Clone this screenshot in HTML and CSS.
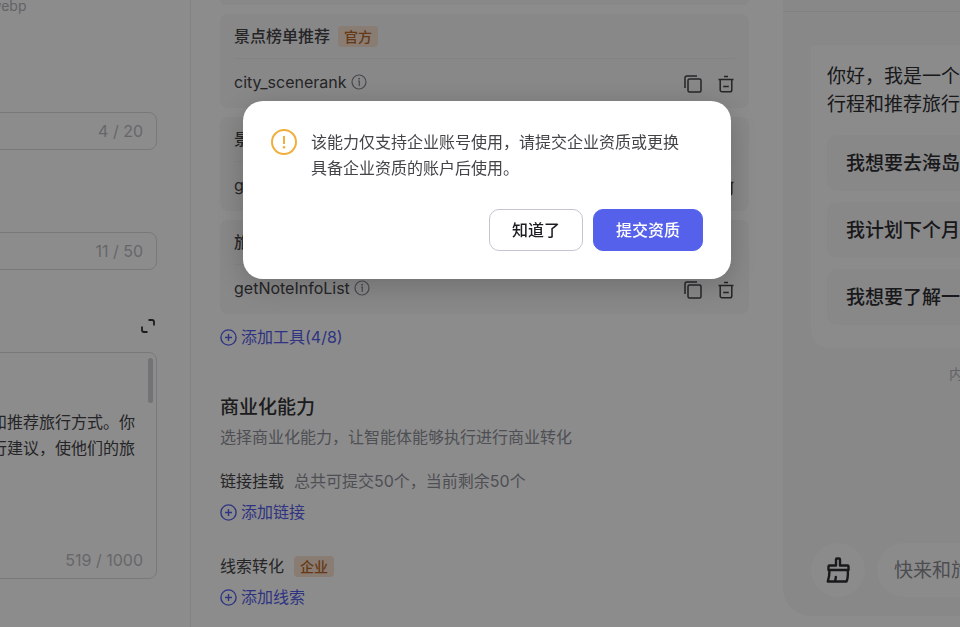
FILE: index.html
```html
<!DOCTYPE html>
<html lang="zh-CN">
    <head>
        <meta charset="utf-8">
        <title>智能体配置</title>
        <link rel="stylesheet" href="styles.css">
    </head>
    <body>
        <!-- shared icons -->
        <svg class="sprite" aria-hidden="true">
            <symbol id="info" viewBox="0 0 16 16">
                <circle cx="8" cy="8" r="7" fill="none" stroke="currentColor" stroke-width="1.2"/>
                <path d="M7 7H8.300V12" fill="none" stroke="currentColor" stroke-width="1.2"/>
                <circle cx="8.100" cy="4.700" r=".9" fill="currentColor"/>
            </symbol>
            <symbol id="copy" viewBox="0 0 18 18">
                <rect x="4" y="4" width="13" height="13" rx="1.5" fill="none" stroke="currentColor" stroke-width="1.5"/>
                <path d="M1 13V3a2 2 0 0 1 2-2h10" fill="none" stroke="currentColor" stroke-width="1.5"/>
            </symbol>
            <symbol id="trash" viewBox="0 0 18 18">
                <path d="M1.5 4.5h15M3.2 4.5V15a1.8 1.8 0 0 0 1.8 1.8h8a1.8 1.8 0 0 0 1.8-1.8V4.5M7 1.500h4M6.2 11.5h5.6" fill="none" stroke="currentColor" stroke-width="1.5"/>
            </symbol>
            <symbol id="plus" viewBox="0 0 17 17">
                <circle cx="8.5" cy="8.5" r="7.6" fill="none" stroke="currentColor" stroke-width="1.4"/>
                <path d="M8.5 5v7M5 8.5h7" fill="none" stroke="currentColor" stroke-width="1.4"/>
            </symbol>
        </svg>

        <main class="page">
            <section class="settings">
                <form class="form">
                    <p class="hint">webp</p>
                    <div class="field">
                        <input type="text" aria-label="名称">
                        <span class="count">4 / 20</span>
                    </div>
                    <div class="field second">
                        <input type="text" aria-label="简介">
                        <span class="count">11 / 50</span>
                    </div>
                    <button type="button" class="icon-btn expand" aria-label="展开">
                        <svg width="14" height="14" viewBox="0 0 14 14" fill="none" stroke="currentColor" stroke-width="1.8"><path d="M7.5 1H11a2 2 0 0 1 2 2v3.5M1 7.5V11a2 2 0 0 0 2 2h3.5"/></svg>
                    </button>
                    <div class="field">
                        <textarea aria-label="设定">


和推荐旅行方式。你
行建议，使他们的旅</textarea>
                        <span class="thumb"></span>
                        <span class="count bottom">519 / 1000</span>
                    </div>
                </form>
            </section>

            <section class="abilities">
                <div class="cards">
                    <div class="card tail"></div>
                    <div class="card">
                        <h3>景点榜单推荐 <span class="tag">官方</span></h3>
                        <div class="tool">
                            <span class="name">city_scenerank <svg class="info"><use href="#info"/></svg></span>
                            <button class="icon-btn" aria-label="复制"><svg width="18" height="18"><use href="#copy"/></svg></button>
                            <button class="icon-btn" aria-label="删除"><svg width="18" height="18"><use href="#trash"/></svg></button>
                        </div>
                    </div>
                    <div class="card">
                        <h3>景</h3>
                        <div class="tool">
                            <span class="name">g</span>
                            <button class="icon-btn" aria-label="复制"><svg width="18" height="18"><use href="#copy"/></svg></button>
                            <button class="icon-btn" aria-label="删除"><svg width="18" height="18"><use href="#trash"/></svg></button>
                        </div>
                    </div>
                    <div class="card">
                        <h3>旅</h3>
                        <div class="tool">
                            <span class="name">getNoteInfoList <svg class="info"><use href="#info"/></svg></span>
                            <button class="icon-btn" aria-label="复制"><svg width="18" height="18"><use href="#copy"/></svg></button>
                            <button class="icon-btn" aria-label="删除"><svg width="18" height="18"><use href="#trash"/></svg></button>
                        </div>
                    </div>
                </div>
                <a class="add" href="#"><svg width="17" height="17"><use href="#plus"/></svg>添加工具(4/8)</a>

                <h2>商业化能力</h2>
                <p class="desc">选择商业化能力，让智能体能够执行进行商业转化</p>

                <div class="row">链接挂载 <span class="muted">总共可提交50个，当前剩余50个</span></div>
                <a class="add" href="#"><svg width="17" height="17"><use href="#plus"/></svg>添加链接</a>

                <div class="row lead">线索转化 <span class="tag">企业</span></div>
                <a class="add" href="#"><svg width="17" height="17"><use href="#plus"/></svg>添加线索</a>
            </section>

            <section class="preview">
                <div class="preview-head"></div>
                <div class="chat">
                    <p>你好，我是一个<br>行程和推荐旅行</p>
                    <button class="suggest">我想要去海岛</button>
                    <button class="suggest">我计划下个月</button>
                    <button class="suggest">我想要了解一</button>
                </div>
                <p class="notice">内</p>
                <div class="bar">
                    <button class="clear" aria-label="清空">
                        <svg width="24" height="28" viewBox="0 0 24 28" fill="none" stroke="currentColor" stroke-width="2.4" stroke-linejoin="round" stroke-linecap="round"><path d="M2.500 14V10.500a1 1 0 0 1 1-1H10V3.500a1 1 0 0 1 1-1h2a1 1 0 0 1 1 1v6h7.500a1 1 0 0 1 1 1V14ZM3.500 14C3.500 19 3 22 1.800 25.500H20.500c1-2 1.600-6 1.300-11.500M9 25c.5-1.200.8-2.500.8-4"/></svg>
                    </button>
                    <input class="ask" type="text" placeholder="快来和旅行" aria-label="输入消息">
                </div>
            </section>
        </main>

        <div class="mask">
            <div class="modal" role="alertdialog" aria-modal="true" aria-describedby="message">
                <div class="message">
                    <svg width="26" height="26" viewBox="0 0 26 26"><circle cx="13" cy="13" r="12" fill="none" stroke="#f2ae3c" stroke-width="2"/><path d="M13 7v8" stroke="#f2ae3c" stroke-width="2"/><circle cx="13" cy="18.300" r="1.300" fill="#f2ae3c"/></svg>
                    <p id="message">该能力仅支持企业账号使用，请提交企业资质或更换<br>具备企业资质的账户后使用。</p>
                </div>
                <div class="actions">
                    <button class="btn">知道了</button>
                    <button class="btn primary">提交资质</button>
                </div>
            </div>
        </div>
    </body>
</html>
```

FILE: styles.css
```css
*{
    box-sizing: border-box;
}
body{
    margin: 0;
    height: 100vh;
    overflow: hidden;
    background-color: white;
    color: #444448;
    font-family: Inter, "Noto Sans CJK SC", sans-serif;
    font-size: 16px;
    line-height: 24px;
}
p, h2, h3{
    margin: 0;
}
button, input, textarea{
    font: inherit;
    color: inherit;
}
.sprite{
    display: none;
}
.page{
    display: flex;
    height: 100vh;
}
.icon-btn{
    display: flex;
    padding: 0;
    border: 0;
    background: none;
}

/* left column */
.settings{
    flex: 0 0 191px;
    display: flex;
    justify-content: flex-end;
    padding-right: 33px;
    border-right: 1px solid #eeeef1;
    overflow: hidden;
}
.form{
    flex: 0 0 178px;
}
.hint{
    padding-left: 11px;
    font-size: 14px;
    line-height: 12px;
    color: #b4b4ba;
    margin-bottom: 100px;
}
.field{
    position: relative;
}
.field input{
    display: block;
    width: 100%;
    height: 38px;
    border: 1px solid #dddde2;
    border-radius: 8px;
    background: none;
}
.second{
    margin-top: 82px;
}
.count{
    position: absolute;
    right: 14px;
    top: 7px;
    color: #bbbbc1;
}
.bottom{
    top: auto;
    bottom: 7px;
}
.expand{
    margin: 49px 2px 19px auto;
    color: #333336;
}
.field textarea{
    display: block;
    width: 100%;
    height: 227px;
    padding: 4px 20px 4px 11px;
    border: 1px solid #dddde2;
    border-radius: 8px;
    background: none;
    line-height: 26px;
    resize: none;
    overflow: hidden;
}
.thumb{
    position: absolute;
    right: 4px;
    top: 6px;
    width: 5px;
    height: 45px;
    border-radius: 3px;
    background-color: #d2d2d6;
}

/* middle column */
.abilities{
    flex: 0 1 592px;
    padding: 0 34px 0 29px;
}
.cards{
    display: flex;
    flex-direction: column;
    gap: 9px;
}
.card{
    padding: 0 14px;
    border-radius: 8px;
    background-color: #f7f7f8;
}
.tail{
    height: 5px;
    border-radius: 0 0 8px 8px;
}
.card h3{
    display: flex;
    align-items: center;
    gap: 8px;
    height: 45px;
    border-bottom: 1px solid #efeff2;
    font-size: 16px;
    font-weight: 500;
}
.tag{
    padding: 0 6px;
    border-radius: 4px;
    background-color: #fae2cf;
    color: #b8662a;
    font-size: 14px;
    font-weight: 500;
    line-height: 21px;
}
.tool{
    display: flex;
    gap: 15px;
    height: 49px;
    padding-top: 11px;
}
.tool .icon-btn{
    padding-top: 5px;
    height: 23px;
}
.name{
    display: flex;
    align-items: center;
    gap: 4px;
    height: 24px;
    margin-right: auto;
}
.info{
    width: 16px;
    height: 16px;
    color: #85858c;
}
.add{
    display: flex;
    align-items: center;
    gap: 4px;
    margin-top: 7px;
    color: #5560eb;
    text-decoration: none;
}
.cards + .add{
    margin-top: 11px;
}
h2{
    margin-top: 45px;
    font-size: 19px;
    font-weight: 500;
    line-height: 28px;
    color: #333336;
}
.desc{
    margin-top: 3px;
    color: #8f9199;
}
.row{
    display: flex;
    align-items: center;
    gap: 10px;
    margin-top: 20px;
}
.lead{
    margin-top: 30px;
}
.muted{
    color: #8f9199;
}

/* chat preview */
.preview{
    flex: 1 1 177px;
    min-width: 0;
    display: flex;
    flex-direction: column;
    margin-bottom: 11px;
    padding: 0 0 19px 28px;
    border-radius: 0 0 0 28px;
    background-color: #f7f7f8;
    overflow: hidden;
    white-space: nowrap;
    font-size: 19px;
    line-height: 28px;
    color: #2e2e33;
}
.preview-head{
    height: 12px;
    margin: 0 0 33px -28px;
    border-bottom: 1px solid #ebebee;
}
.chat{
    display: flex;
    flex-direction: column;
    gap: 11px;
    padding: 18px 0 23px 16px;
    border-radius: 4px 0 0 18px;
    background-color: #fdfdfd;
}
.chat p{
    margin-bottom: 5px;
}
.suggest{
    height: 56px;
    padding: 2px 0 0 19px;
    border: 0;
    border-radius: 10px 0 0 10px;
    background-color: #f7f7f8;
    font-weight: 500;
    text-align: left;
}
.notice{
    margin-top: 12px;
    padding-left: 138px;
    font-size: 14px;
    color: #b4b4ba;
}
.bar{
    display: flex;
    gap: 12px;
    margin-top: auto;
}
.clear{
    flex: 0 0 54px;
    height: 54px;
    display: flex;
    align-items: center;
    justify-content: center;
    padding: 0;
    border: 0;
    border-radius: 50%;
    background-color: #fdfdfd;
}
.ask{
    flex: 1;
    min-width: 0;
    height: 54px;
    padding: 0 0 0 17px;
    border: 0;
    border-radius: 27px 0 0 27px;
    background-color: #fdfdfd;
}
.ask::placeholder{
    color: #8c8c94;
}

/* dialog */
.mask{
    position: fixed;
    inset: 0;
    display: flex;
    justify-content: center;
    align-items: flex-start;
    padding: 101px 0 0 14px;
    background-color: rgba(0, 0, 0, 0.45);
}
.modal{
    width: 488px;
    padding: 28px;
    border-radius: 20px;
    background-color: white;
    box-shadow: 0 6px 30px rgba(0, 0, 0, 0.2);
}
.message{
    display: flex;
    gap: 14px;
    line-height: 26px;
}
.actions{
    display: flex;
    justify-content: flex-end;
    gap: 10px;
    margin-top: 28px;
}
.btn{
    height: 42px;
    padding: 0 22px;
    border: 1px solid #c4c5d3;
    border-radius: 10px;
    background-color: white;
    color: #1c1c22;
    font-weight: 500;
}
.primary{
    border-color: #5560eb;
    background-color: #5560eb;
    color: white;
}
```
